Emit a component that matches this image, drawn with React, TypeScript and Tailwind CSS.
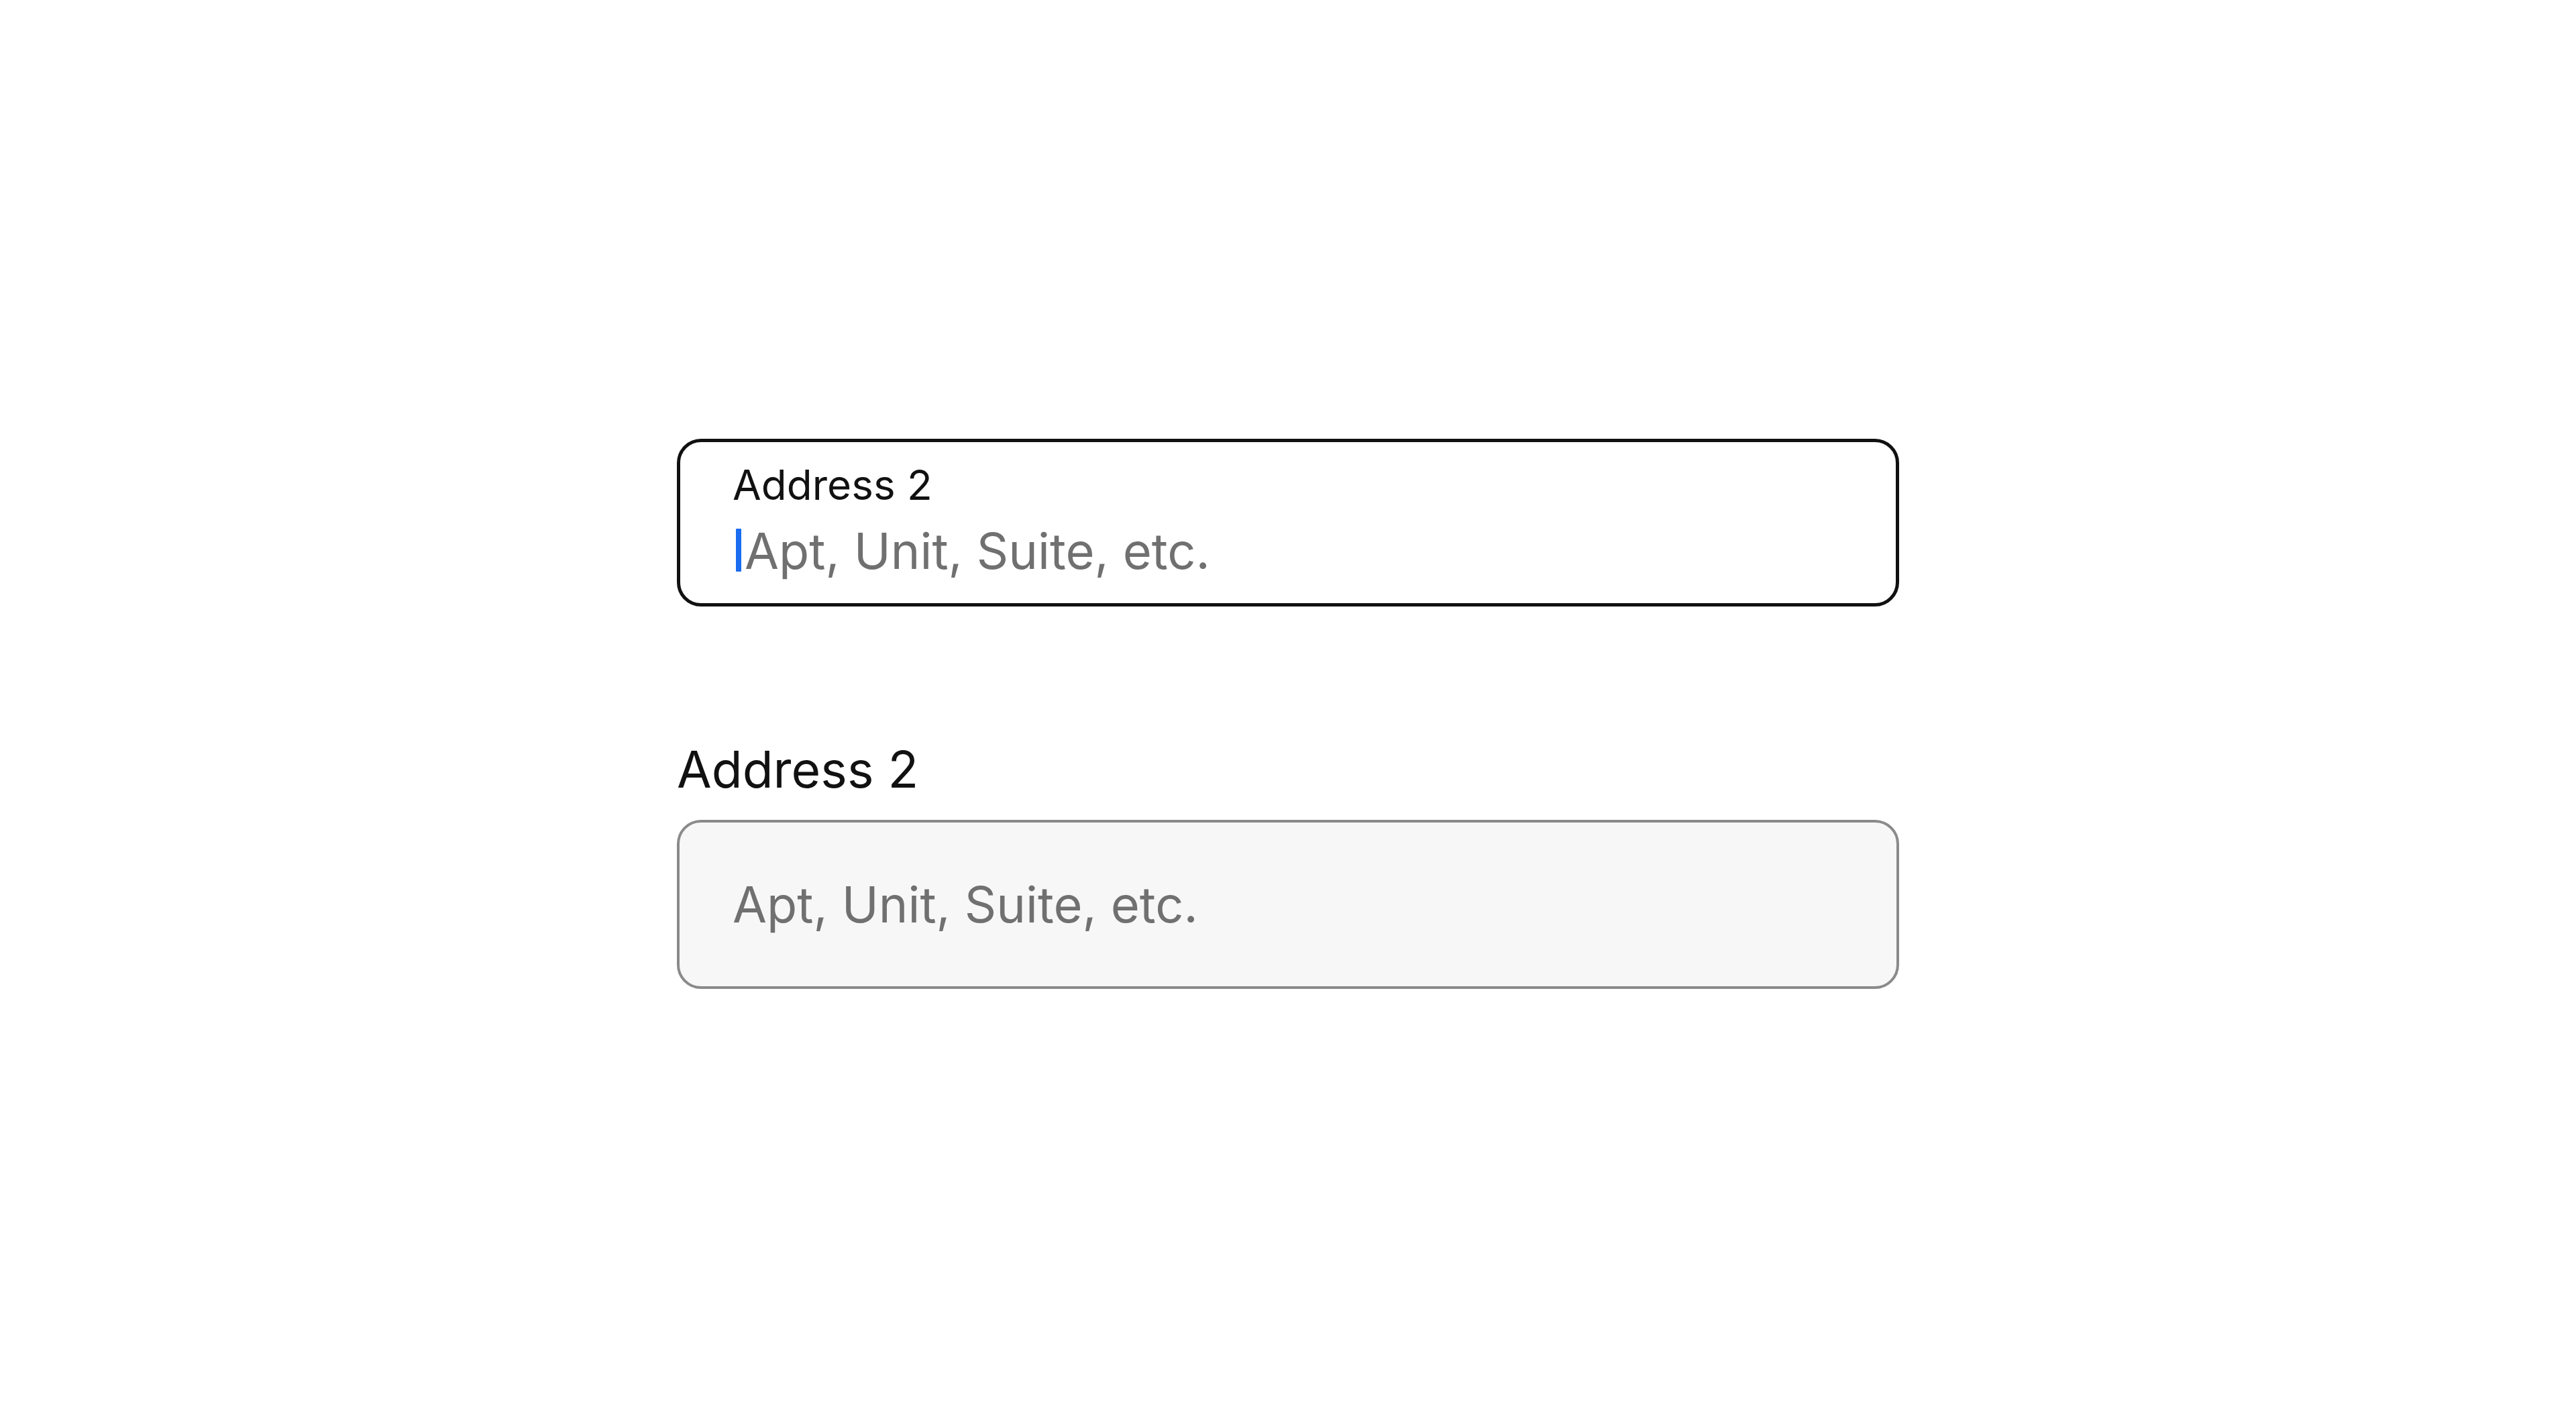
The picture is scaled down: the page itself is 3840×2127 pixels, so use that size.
import React from "react";

const font = { fontFamily: "Inter, 'Noto Sans', sans-serif" };

function FloatingField() {
  return (
    <div className="w-[1822px] h-[250px] rounded-[36px] border-[5px] border-[#111111] bg-white pl-[78px] pt-[27px] flex flex-col">
      <span className="text-[62px] leading-[74px] text-[#111111]">Address 2</span>
      <div className="mt-[17px] flex items-start h-[88px]">
        {/* caret */}
        <span className="mt-[11px] ml-[5px] w-[8px] h-[64px] rounded-[1px] bg-[#1a6cf0]" />
        <span className="ml-[5px] text-[74px] leading-[88px] text-[#707070]">
          Apt, Unit, Suite, etc.
        </span>
      </div>
    </div>
  );
}

function StackedField() {
  return (
    <div className="flex flex-col w-[1822px]">
      <label className="text-[75px] leading-[90px] text-[#111111]">Address 2</label>
      <div className="mt-[30px] h-[252px] rounded-[36px] border-4 border-[#8a8a8a] bg-[#f7f7f7] pl-[79px] flex items-center">
        <span className="text-[74px] leading-[88px] text-[#707070]">Apt, Unit, Suite, etc.</span>
      </div>
    </div>
  );
}

export default function App() {
  return (
    <div style={font} className="min-h-screen bg-white flex flex-col items-center justify-center">
      <FloatingField />
      <div className="h-[198px]" />
      <StackedField />
    </div>
  );
}
